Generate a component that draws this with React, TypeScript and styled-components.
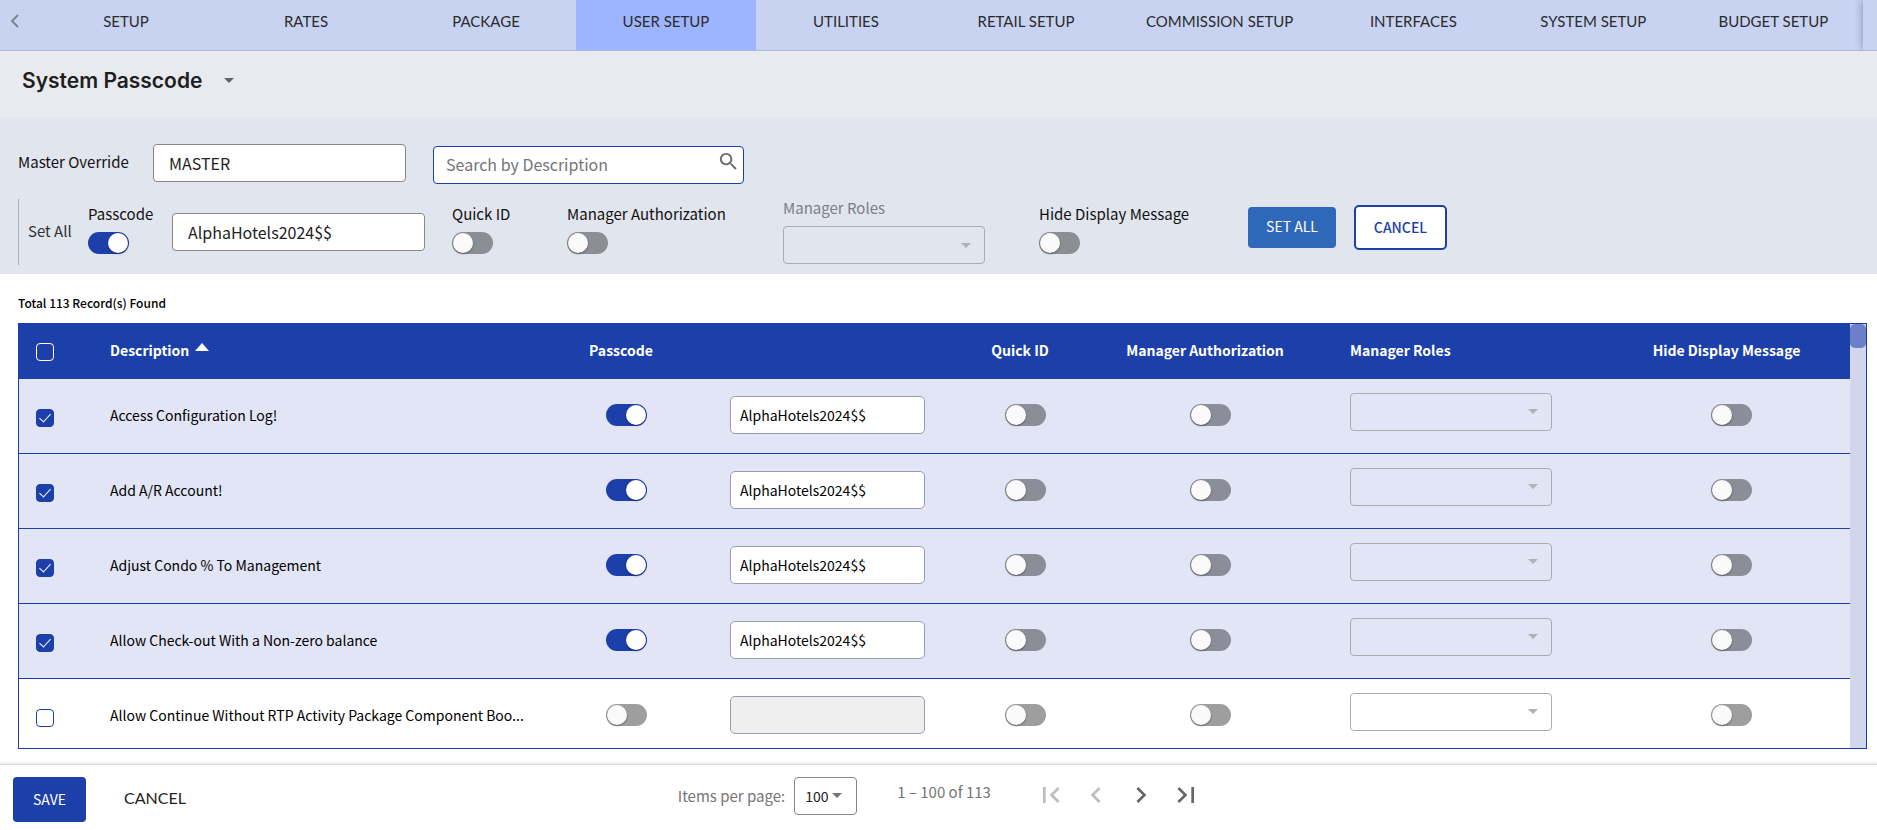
import React, { useState } from "react";
import styled, { createGlobalStyle } from "styled-components";

const BLUE = "#1c3faa";
const SANS = `"Noto Sans CJK SC", "Noto Sans", sans-serif`;
const DISPLAY = `Lato, "Open Sans", sans-serif`;

const GlobalStyle = createGlobalStyle`
  *, *::before, *::after { box-sizing: border-box; }
  body { margin: 0; background: #fff; color: #111; font-family: ${SANS}; font-size: 15px; line-height: 24px; }
  button, input, select { font: inherit; color: inherit; margin: 0; }
`;

const Page = styled.div`
  display: flex;
  flex-direction: column;
  height: 100vh;
  overflow: hidden;
`;

const TabBar = styled.nav`
  display: flex;
  flex: none;
  height: 51px;
  overflow: hidden;
  background: #c8d3f2;
  border-bottom: 1px solid #b0b8dc;
  font-family: ${DISPLAY};
`;

const PagerBack = styled.button`
  flex: none;
  width: 36px;
  padding: 0 0 6px 10px;
  border: 0;
  background: none;
  text-align: left;
  color: #7d8398;
`;

const PagerForward = styled.div`
  flex: 1 0 12px;
  box-shadow: 0 0 8px rgba(40, 50, 110, 0.45);
`;

const Tab = styled.a<{ $active?: boolean }>`
  flex: none;
  min-width: 180px;
  padding: 9px 30px 0;
  text-align: center;
  text-decoration: none;
  white-space: nowrap;
  color: #2b2b2b;
  background: ${(p) => (p.$active ? "#9db4ff" : "transparent")};
`;

const TitleBar = styled.header`
  display: flex;
  flex: none;
  align-items: center;
  gap: 22px;
  height: 67px;
  padding: 0 22px 8px;
  background: #e8eaf0;
`;

const Title = styled.h1`
  margin: 0;
  font: 600 21px/30px Inter, sans-serif;
  color: #1e1e1e;
`;

const MenuButton = styled.button`
  display: flex;
  padding: 0;
  border: 0;
  background: none;
  color: #666;
`;

const Filters = styled.section`
  flex: none;
  height: 156px;
  padding: 26px 18px 0;
  background: #e1e5ee;
`;

const FilterRow = styled.div`
  display: flex;
  align-items: flex-start;
`;

const OverrideLabel = styled.label`
  width: 135px;
  padding-top: 6px;
`;

const TextBox = styled.input`
  width: 253px;
  height: 38px;
  padding: 0 15px;
  border: 1px solid #868686;
  border-radius: 4px;
  background: #fff;
  font-size: 16px;
  color: #222;
`;

const SearchBox = styled.div`
  display: flex;
  width: 311px;
  height: 38px;
  margin: 2px 0 0 27px;
  padding: 0 3px 2px 12px;
  border: 1px solid ${BLUE};
  border-radius: 4px;
  background: #fff;
  color: #6c6c6c;

  input {
    flex: 1;
    min-width: 0;
    padding: 0;
    border: 0;
    outline: 0;
    background: none;
    font-size: 16px;
  }
  input::placeholder { color: #757575; opacity: 1; }
  svg { margin-top: 3px; }
`;

const SetAllRow = styled.div`
  display: flex;
  align-items: flex-start;
  height: 66px;
  margin-top: 15px;
  padding-left: 9px;
  border-left: 1px solid #aab0bb;
`;

const SetAllText = styled.span`
  width: 60px;
  padding-top: 20px;
  color: #333;
`;

const SwitchField = styled.label<{ $width: number }>`
  display: flex;
  flex-direction: column;
  gap: 6px;
  width: ${(p) => p.$width}px;
  padding-top: 3px;
  white-space: nowrap;
`;

const PasscodeBox = styled(TextBox)`
  margin: 14px 27px 0 0;
`;

const RolesField = styled.label`
  display: flex;
  flex-direction: column;
  gap: 6px;
  width: 256px;
  margin-top: -3px;
  color: #7b7f87;
`;

const Switch = styled.input<{ $tone?: string }>`
  appearance: none;
  flex: none;
  position: relative;
  width: 41px;
  height: 22px;
  border-radius: 11px;
  background: ${(p) => p.$tone ?? "#8b8e93"};
  vertical-align: middle;

  &::before {
    content: "";
    position: absolute;
    top: 1px;
    left: 1px;
    width: 20px;
    height: 20px;
    border-radius: 50%;
    background: #fafafa;
    box-shadow: 0 1px 2px rgba(0, 0, 0, 0.4);
  }
  &:checked { background: ${BLUE}; }
  &:checked::before { left: 20px; background: #fff; }
`;

const RoleBox = styled.span`
  display: inline-grid;
  align-items: center;
  width: 202px;
  vertical-align: middle;

  select, svg { grid-area: 1 / 1; }
  svg { justify-self: end; margin-right: 14px; color: #b0b2b8; pointer-events: none; }
`;

const RoleSelectInput = styled.select`
  appearance: none;
  width: 100%;
  height: 38px;
  padding: 0 32px 0 12px;
  border: 1px solid #aaacb0;
  border-radius: 4px;
  background: transparent;
  opacity: 1;
`;

const ApplyButton = styled.button`
  width: 88px;
  height: 41px;
  margin: 8px 18px 0 0;
  padding: 0 0 3px;
  border: 0;
  border-radius: 4px;
  background: #2f68b9;
  font-size: 14px;
  color: #fff;
`;

const OutlineButton = styled.button`
  width: 93px;
  height: 45px;
  margin-top: 6px;
  padding: 0 0 1px;
  border: 2px solid ${BLUE};
  border-radius: 5px;
  background: #fff;
  font-size: 14px;
  font-weight: 500;
  color: ${BLUE};
`;

const Content = styled.main`
  display: flex;
  flex: 1;
  flex-direction: column;
  min-height: 0;
  padding: 19px 10px 15px 18px;
`;

const RecordCount = styled.p`
  margin: 0 0 10px;
  font-size: 12px;
  line-height: 20px;
  font-weight: 500;
  color: #000;
`;

const GridFrame = styled.div`
  display: flex;
  flex: 1;
  min-height: 0;
  border: 1px solid ${BLUE};
`;

const GridScroll = styled.div`
  flex: 1;
  min-width: 0;
  overflow: auto;
  scrollbar-width: none;
`;

const ScrollTrack = styled.div`
  flex: none;
  width: 16px;
  background: #d1d6ed;
`;

const ScrollThumb = styled.div`
  height: 24px;
  border-radius: 5px;
  background: #6b80c8;
`;

const Grid = styled.table`
  width: 100%;
  table-layout: fixed;
  border-collapse: separate;
  border-spacing: 0;
  font-size: 14px;
  color: #000;
`;

const HeadCell = styled.th<{ $center?: boolean; $left?: number; $bottom?: number }>`
  height: 55px;
  padding: 0 0 ${(p) => p.$bottom ?? 3}px ${(p) => p.$left ?? 0}px;
  background: ${BLUE};
  color: #fff;
  font-size: 14px;
  font-weight: 700;
  text-align: ${(p) => (p.$center ? "center" : "left")};
  white-space: nowrap;

  svg { margin-left: 6px; vertical-align: 5px; }
`;

const Row = styled.tr<{ $selected: boolean }>`
  background: ${(p) => (p.$selected ? "#e2e5f5" : "#fff")};
`;

const Cell = styled.td<{ $center?: boolean; $left?: number; $top?: number; $bottom?: number }>`
  height: 75px;
  padding: ${(p) => p.$top ?? 0}px 0 ${(p) => p.$bottom ?? 0}px ${(p) => p.$left ?? 0}px;
  border-bottom: 1px solid ${BLUE};
  text-align: ${(p) => (p.$center ? "center" : "left")};
  vertical-align: middle;
`;

const Description = styled.div`
  overflow: hidden;
  padding-right: 8px;
  text-overflow: ellipsis;
  white-space: nowrap;
`;

const Check = styled.input<{ $onBlue?: boolean }>`
  appearance: none;
  position: relative;
  display: block;
  width: 18px;
  height: 18px;
  border: 1px solid ${(p) => (p.$onBlue ? "#fff" : BLUE)};
  border-radius: 4px;

  &:checked { background: ${BLUE}; }
  &:checked::before {
    content: "";
    position: absolute;
    top: 1px;
    left: 5px;
    width: 6px;
    height: 11px;
    border: solid #fff;
    border-width: 0 1px 1px 0;
    transform: rotate(42deg);
  }
`;

const CellBox = styled.input`
  display: block;
  width: 195px;
  height: 38px;
  padding: 0 9px 1px;
  border: 1px solid #959dae;
  border-radius: 5px;
  background: #fff;

  &:disabled { background: #efefef; }
`;

const Footer = styled.footer`
  display: grid;
  grid-template-columns: 1fr auto 1fr;
  align-items: center;
  flex: none;
  height: 66px;
  padding: 0 13px;
  border-top: 1px solid #dcdcdc;
  box-shadow: 0 -1px 3px rgba(0, 0, 0, 0.12);
`;

const Actions = styled.div`
  display: flex;
  align-items: center;
  gap: 18px;
  padding-top: 4px;
`;

const SaveButton = styled.button`
  width: 73px;
  height: 45px;
  padding: 0 0 1px;
  border: 0;
  border-radius: 4px;
  background: ${BLUE};
  font-size: 14px;
  color: #fff;
`;

const TextButton = styled.button`
  padding: 0 20px 3px;
  border: 0;
  background: none;
  font-family: ${DISPLAY};
  font-size: 16px;
  color: #222;
`;

const Paginator = styled.div`
  display: flex;
  align-items: center;
  padding: 0 0 4px 9px;
  color: #757575;
`;

const PageSizeLabel = styled.label`
  display: flex;
  align-items: center;
  gap: 9px;
`;

const PageSize = styled.span`
  display: inline-grid;
  align-items: center;
  width: 63px;

  select, svg { grid-area: 1 / 1; }
  select {
    appearance: none;
    width: 100%;
    height: 38px;
    padding: 0 0 0 10px;
    border: 1px solid #868686;
    border-radius: 4px;
    background: #fff;
    font-size: 14px;
    color: #222;
  }
  svg { justify-self: end; margin-right: 15px; pointer-events: none; }
`;

const Range = styled.span`
  width: 131px;
  margin-left: 40px;
  padding-bottom: 8px;
  white-space: nowrap;
`;

const PageButton = styled.button`
  display: flex;
  justify-content: center;
  width: 45px;
  padding: 0 0 2px;
  border: 0;
  background: none;
  color: #666;

  &:disabled { color: #bdbdbd; }
`;

const Caret = () => (
  <svg width="10" height="5" viewBox="0 0 10 5" fill="currentColor" aria-hidden="true">
    <path d="M0 0h10L5 5z" />
  </svg>
);

const GlyphIcon = ({ d, size = 32 }: { d: string; size?: number }) => (
  <svg width={size} height={size} viewBox="0 0 24 24" fill="currentColor" aria-hidden="true">
    <path d={d} />
  </svg>
);

const ICONS = {
  first: "M18.41 16.59L13.82 12l4.59-4.59L17 6l-6 6 6 6zM6 6h2v12H6z",
  prev: "M15.41 7.41L14 6l-6 6 6 6 1.41-1.41L10.83 12z",
  next: "M10 6L8.59 7.41 13.17 12l-4.58 4.59L10 18l6-6z",
  last: "M5.59 7.41L10.18 12l-4.59 4.59L7 18l6-6-6-6zM16 6h2v12h-2z",
  search:
    "M15.5 14h-.79l-.28-.27C15.41 12.59 16 11.11 16 9.5 16 5.91 13.09 3 9.5 3S3 5.91 3 9.5 5.91 16 9.5 16c1.61 0 3.09-.59 4.23-1.57l.27.28v.79l5 4.99L20.49 19l-4.99-5zm-6 0C7.01 14 5 11.99 5 9.5S7.01 5 9.5 5 14 7.01 14 9.5 11.99 14 9.5 14z",
};

const RoleSelect = ({ label }: { label?: string }) => (
  <RoleBox>
    <RoleSelectInput disabled aria-label={label} />
    <Caret />
  </RoleBox>
);

const TABS = [
  "SETUP",
  "RATES",
  "PACKAGE",
  "USER SETUP",
  "UTILITIES",
  "RETAIL SETUP",
  "COMMISSION SETUP",
  "INTERFACES",
  "SYSTEM SETUP",
  "BUDGET SETUP",
];

const COLUMN_WIDTHS = [91, 442, 138, 275, 110, 260, 268, 247];

const RECORDS = [
  { name: "Access Configuration Log!", selected: true },
  { name: "Add A/R Account!", selected: true },
  { name: "Adjust Condo % To Management", selected: true },
  { name: "Allow Check-out With a Non-zero balance", selected: true },
  { name: "Allow Continue Without RTP Activity Package Component Boo...", selected: false },
];

const RecordRow = ({ name, selected }: { name: string; selected: boolean }) => {
  const tone = selected ? "#8b8e98" : "#9e9e9e";
  return (
    <Row $selected={selected}>
      <Cell $left={17} $top={3}>
        <Check type="checkbox" defaultChecked={selected} aria-label={`Select ${name}`} />
      </Cell>
      <Cell $bottom={3}>
        <Description>{name}</Description>
      </Cell>
      <Cell $center $left={10} $bottom={5}>
        <Switch type="checkbox" role="switch" $tone={tone} defaultChecked={selected} aria-label={`Passcode for ${name}`} />
      </Cell>
      <Cell $left={40} $bottom={2}>
        <CellBox defaultValue={selected ? "AlphaHotels2024$$" : ""} disabled={!selected} aria-label={`Passcode value for ${name}`} />
      </Cell>
      <Cell $center $left={10} $bottom={5}>
        <Switch type="checkbox" role="switch" $tone={tone} aria-label={`Quick ID for ${name}`} />
      </Cell>
      <Cell $center $left={10} $bottom={5}>
        <Switch type="checkbox" role="switch" $tone={tone} aria-label={`Manager authorization for ${name}`} />
      </Cell>
      <Cell $left={15} $bottom={9}>
        <RoleSelect label={`Manager roles for ${name}`} />
      </Cell>
      <Cell $center $left={10} $bottom={5}>
        <Switch type="checkbox" role="switch" $tone={tone} aria-label={`Hide display message for ${name}`} />
      </Cell>
    </Row>
  );
};

export default function App() {
  const [active, setActive] = useState("USER SETUP");

  return (
    <Page>
      <GlobalStyle />
      <TabBar>
        <PagerBack aria-label="Previous tabs">
          <svg width="10" height="14" viewBox="0 0 10 14" fill="none" stroke="currentColor" strokeWidth="2" aria-hidden="true">
            <path d="M8 1L2 7l6 6" />
          </svg>
        </PagerBack>
        {TABS.map((tab) => (
          <Tab key={tab} href="#" $active={tab === active} onClick={() => setActive(tab)}>
            {tab}
          </Tab>
        ))}
        <PagerForward />
      </TabBar>

      <TitleBar>
        <Title>System Passcode</Title>
        <MenuButton aria-label="Choose page">
          <Caret />
        </MenuButton>
      </TitleBar>

      <Filters>
        <FilterRow>
          <OverrideLabel htmlFor="master-override">Master Override</OverrideLabel>
          <TextBox id="master-override" defaultValue="MASTER" />
          <SearchBox>
            <input placeholder="Search by Description" aria-label="Search by Description" />
            <GlyphIcon d={ICONS.search} size={23} />
          </SearchBox>
        </FilterRow>

        <SetAllRow>
          <SetAllText>Set All</SetAllText>
          <SwitchField $width={84}>
            Passcode
            <Switch type="checkbox" role="switch" defaultChecked />
          </SwitchField>
          <PasscodeBox defaultValue="AlphaHotels2024$$" aria-label="Passcode value" />
          <SwitchField $width={115}>
            Quick ID
            <Switch type="checkbox" role="switch" />
          </SwitchField>
          <SwitchField $width={216}>
            Manager Authorization
            <Switch type="checkbox" role="switch" />
          </SwitchField>
          <RolesField>
            Manager Roles
            <RoleSelect />
          </RolesField>
          <SwitchField $width={209}>
            Hide Display Message
            <Switch type="checkbox" role="switch" />
          </SwitchField>
          <ApplyButton>SET ALL</ApplyButton>
          <OutlineButton>CANCEL</OutlineButton>
        </SetAllRow>
      </Filters>

      <Content>
        <RecordCount>Total 113 Record(s) Found</RecordCount>
        <GridFrame>
          <GridScroll>
            <Grid>
              <colgroup>
                {COLUMN_WIDTHS.map((width, i) => (
                  <col key={i} width={width} />
                ))}
              </colgroup>
              <thead>
                <tr>
                  <HeadCell $left={17} $bottom={0}>
                    <Check type="checkbox" $onBlue aria-label="Select all" />
                  </HeadCell>
                  <HeadCell>
                    Description
                    <svg width="14" height="8" viewBox="0 0 14 8" fill="#fff" aria-hidden="true">
                      <path d="M0 8l7-8 7 8z" />
                    </svg>
                  </HeadCell>
                  <HeadCell $center>Passcode</HeadCell>
                  <HeadCell />
                  <HeadCell $center>Quick ID</HeadCell>
                  <HeadCell $center>Manager Authorization</HeadCell>
                  <HeadCell $left={15}>Manager Roles</HeadCell>
                  <HeadCell $center>Hide Display Message</HeadCell>
                </tr>
              </thead>
              <tbody>
                {RECORDS.map((record) => (
                  <RecordRow key={record.name} {...record} />
                ))}
              </tbody>
            </Grid>
          </GridScroll>
          <ScrollTrack>
            <ScrollThumb />
          </ScrollTrack>
        </GridFrame>
      </Content>

      <Footer>
        <Actions>
          <SaveButton>SAVE</SaveButton>
          <TextButton>CANCEL</TextButton>
        </Actions>
        <Paginator>
          <PageSizeLabel>
            Items per page:
            <PageSize>
              <select defaultValue="100">
                <option>50</option>
                <option>100</option>
              </select>
              <Caret />
            </PageSize>
          </PageSizeLabel>
          <Range>1 – 100 of 113</Range>
          <PageButton disabled aria-label="First page"><GlyphIcon d={ICONS.first} /></PageButton>
          <PageButton disabled aria-label="Previous page"><GlyphIcon d={ICONS.prev} /></PageButton>
          <PageButton aria-label="Next page"><GlyphIcon d={ICONS.next} /></PageButton>
          <PageButton aria-label="Last page"><GlyphIcon d={ICONS.last} /></PageButton>
        </Paginator>
      </Footer>
    </Page>
  );
}
